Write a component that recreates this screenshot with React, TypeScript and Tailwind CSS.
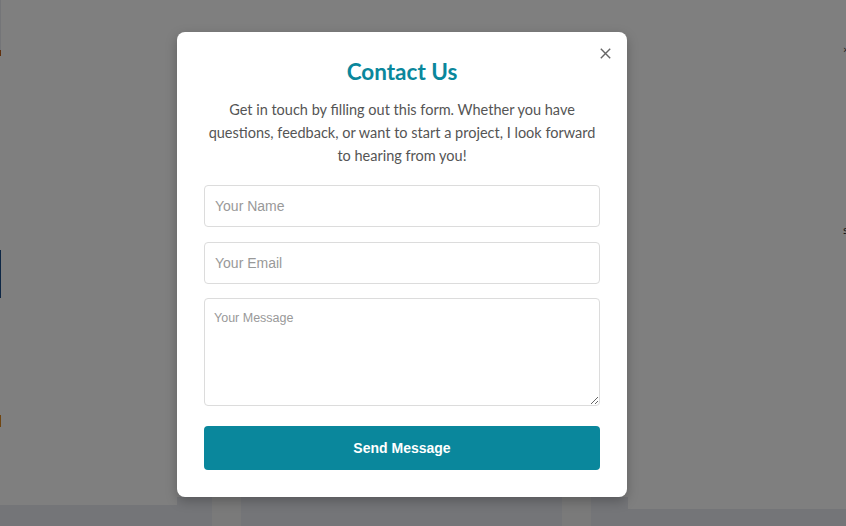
import React from "react";

function Col({ w, top, rest }: { w: string; top: string; rest: string }) {
  return (
    <div className={`${w} shrink-0 flex flex-col`}>
      <div className={`${top} shrink-0 bg-white`} />
      <div className={`flex-1 ${rest}`} />
    </div>
  );
}

export default function App() {
  return (
    <div className="relative w-[846px] h-[526px] overflow-hidden bg-[#e9ebf0]">
      {/* background page */}
      <div className="flex h-full">
        <div className="w-px shrink-0 flex flex-col">
          <div className="h-[50px]" />
          <div className="h-[6px] bg-[#c0601a]" />
          <div className="h-[194px] bg-white" />
          <div className="h-[48px] bg-[#1d4f8a]" />
          <div className="h-[117px] bg-white" />
          <div className="h-[12px] bg-[#e08a20]" />
          <div className="h-[78px] bg-white" />
        </div>
        <Col w="w-[176px]" top="h-[505px]" rest="bg-[#e9ebf0]" />
        <Col w="w-[35px]" top="h-[497px]" rest="bg-[#e9ebf0]" />
        <Col w="w-[29px]" top="h-[497px]" rest="bg-[#f4f4f5]" />
        <Col w="w-[321px]" top="h-[497px]" rest="bg-[#e9ebf0]" />
        <Col w="w-[29px]" top="h-[497px]" rest="bg-[#f4f4f5]" />
        <Col w="w-[37px]" top="h-[497px]" rest="bg-[#e9ebf0]" />
        <Col w="w-[213px]" top="h-[509px]" rest="bg-[#e9ebf0]" />
        <div className="w-[5px] shrink-0 h-[509px] bg-white flex flex-col font-['DejaVu_Sans',sans-serif] text-[11px] text-[#333] leading-none">
          <div className="mt-[44px] ml-[2px]">›</div>
          <div className="mt-[170px] ml-[2px]">s</div>
        </div>
      </div>

      {/* overlay */}
      <div className="absolute inset-0 bg-black/50 flex items-start pl-[177px] pt-[32px]">
        <div className="relative w-[450px] h-[465px] bg-white rounded-lg shadow-[0_4px_12px_rgba(0,0,0,0.25)] px-[27px] pt-[27px] flex flex-col">
          <button className="absolute top-[16px] right-[16px] w-[11px] h-[11px] text-[#666]">
            <svg viewBox="0 0 11 11" width="11" height="11" fill="none" stroke="currentColor" strokeWidth="1.4">
              <path d="M0.8 0.8 L10.2 10.2 M10.2 0.8 L0.8 10.2" />
            </svg>
          </button>
          <h2 className="text-center font-bold text-[22.5px] leading-[26px] text-[#0a879c] font-['Lato','Open_Sans',sans-serif]">
            Contact Us
          </h2>
          <p className="mt-[13px] text-center text-[14.5px] leading-[23px] text-[#555] font-['Lato','Open_Sans',sans-serif] px-[3px]">
            Get in touch by filling out this form. Whether you have questions, feedback, or want to start a project, I look forward to hearing from you!
          </p>
          <form className="mt-[18px] flex flex-col font-['Liberation_Sans',Arial,sans-serif]">
            <input
              type="text"
              placeholder="Your Name"
              className="h-[42px] w-full border border-[#dcdcdc] rounded-[4px] px-[10px] text-[14px] placeholder:text-[#999] outline-none"
            />
            <input
              type="email"
              placeholder="Your Email"
              className="mt-[15px] h-[42px] w-full border border-[#dcdcdc] rounded-[4px] px-[10px] text-[14px] placeholder:text-[#999] outline-none"
            />
            <textarea
              placeholder="Your Message"
              className="mt-[14px] h-[108px] w-full border border-[#dcdcdc] rounded-[4px] px-[9px] py-[10px] text-[12.5px] placeholder:text-[#999] outline-none"
            />
            <button
              type="button"
              className="mt-[20px] h-[44px] w-full rounded-[4px] bg-[#0a879c] text-white font-bold text-[14px]"
            >
              Send Message
            </button>
          </form>
        </div>
      </div>
    </div>
  );
}
